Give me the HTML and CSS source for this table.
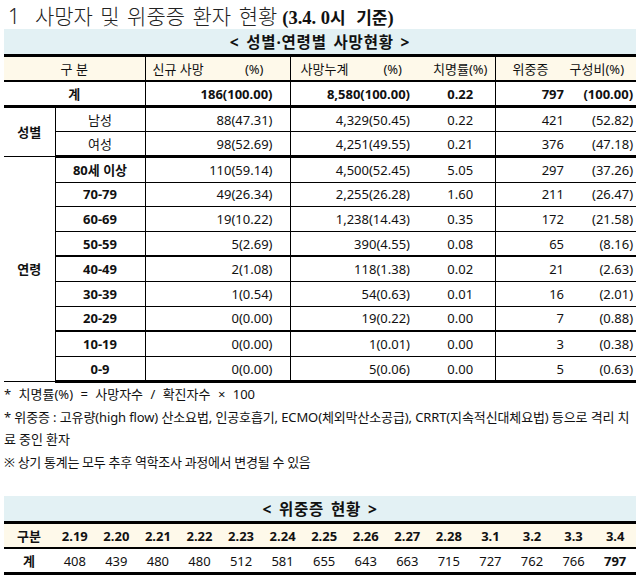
FILE: index.html
```html
<!DOCTYPE html>
<html lang="ko">
<head>
<meta charset="utf-8">
<title>사망자 및 위중증 환자 현황</title>
<link rel="stylesheet" href="styles.css">
</head>
<body>
<div class="page">
  <h1 class="title"><span class="title-main">1&nbsp; 사망자 및 위중증 환자 현황</span><span class="title-date"><span class="serif">(3.4. 0</span>시 기준<span class="serif">)</span></span></h1>

  <table class="deaths">
    <colgroup>
      <col class="c1"><col class="c2"><col class="c3"><col class="c4"><col class="c5"><col class="c6a"><col class="c6b">
    </colgroup>
    <thead>
      <tr class="band"><th colspan="7">&lt; 성별·연령별 사망현황 &gt;</th></tr>
      <tr class="head">
        <th colspan="2" class="vr">구 분</th>
        <th class="vr"><div class="split split-new"><span>신규 사망</span><span>(%)</span></div></th>
        <th><div class="split split-cum"><span>사망누계</span><span>(%)</span></div></th>
        <th class="vr">치명률(%)</th>
        <th colspan="2"><div class="split split-sev"><span>위중증</span><span>구성비(%)</span></div></th>
      </tr>
    </thead>
    <tbody>
      <tr class="total grp-end">
        <td colspan="2" class="vr center">계</td>
        <td class="vr num n-new">186(100.00)</td>
        <td class="num n-cum">8,580(100.00)</td>
        <td class="vr center">0.22</td>
        <td class="num n-sev">797</td>
        <td class="num n-pct">(100.00)</td>
      </tr>
      <tr>
        <td rowspan="2" class="vr center grp">성별</td>
        <td class="vr center">남성</td>
        <td class="vr num n-new">88(47.31)</td>
        <td class="num n-cum">4,329(50.45)</td>
        <td class="vr center">0.22</td>
        <td class="num n-sev">421</td>
        <td class="num n-pct">(52.82)</td>
      </tr>
      <tr class="grp-end">
        <td class="vr center">여성</td>
        <td class="vr num n-new">98(52.69)</td>
        <td class="num n-cum">4,251(49.55)</td>
        <td class="vr center">0.21</td>
        <td class="num n-sev">376</td>
        <td class="num n-pct">(47.18)</td>
      </tr>
      <tr class="age-row">
        <td rowspan="9" class="vr center grp">연령</td>
        <td class="vr center age">80세 이상</td>
        <td class="vr num n-new">110(59.14)</td>
        <td class="num n-cum">4,500(52.45)</td>
        <td class="vr center">5.05</td>
        <td class="num n-sev">297</td>
        <td class="num n-pct">(37.26)</td>
      </tr>
      <tr class="age-row">
        <td class="vr center age">70-79</td>
        <td class="vr num n-new">49(26.34)</td>
        <td class="num n-cum">2,255(26.28)</td>
        <td class="vr center">1.60</td>
        <td class="num n-sev">211</td>
        <td class="num n-pct">(26.47)</td>
      </tr>
      <tr class="age-row">
        <td class="vr center age">60-69</td>
        <td class="vr num n-new">19(10.22)</td>
        <td class="num n-cum">1,238(14.43)</td>
        <td class="vr center">0.35</td>
        <td class="num n-sev">172</td>
        <td class="num n-pct">(21.58)</td>
      </tr>
      <tr class="age-row mid">
        <td class="vr center age">50-59</td>
        <td class="vr num n-new">5(2.69)</td>
        <td class="num n-cum">390(4.55)</td>
        <td class="vr center">0.08</td>
        <td class="num n-sev">65</td>
        <td class="num n-pct">(8.16)</td>
      </tr>
      <tr class="age-row">
        <td class="vr center age">40-49</td>
        <td class="vr num n-new">2(1.08)</td>
        <td class="num n-cum">118(1.38)</td>
        <td class="vr center">0.02</td>
        <td class="num n-sev">21</td>
        <td class="num n-pct">(2.63)</td>
      </tr>
      <tr class="age-row">
        <td class="vr center age">30-39</td>
        <td class="vr num n-new">1(0.54)</td>
        <td class="num n-cum">54(0.63)</td>
        <td class="vr center">0.01</td>
        <td class="num n-sev">16</td>
        <td class="num n-pct">(2.01)</td>
      </tr>
      <tr class="age-row mid">
        <td class="vr center age">20-29</td>
        <td class="vr num n-new">0(0.00)</td>
        <td class="num n-cum">19(0.22)</td>
        <td class="vr center">0.00</td>
        <td class="num n-sev">7</td>
        <td class="num n-pct">(0.88)</td>
      </tr>
      <tr class="age-row">
        <td class="vr center age">10-19</td>
        <td class="vr num n-new">0(0.00)</td>
        <td class="num n-cum">1(0.01)</td>
        <td class="vr center">0.00</td>
        <td class="num n-sev">3</td>
        <td class="num n-pct">(0.38)</td>
      </tr>
      <tr class="age-row last">
        <td class="vr center age">0-9</td>
        <td class="vr num n-new">0(0.00)</td>
        <td class="num n-cum">5(0.06)</td>
        <td class="vr center">0.00</td>
        <td class="num n-sev">5</td>
        <td class="num n-pct">(0.63)</td>
      </tr>
    </tbody>
  </table>

  <div class="notes">
    <p class="note note-wide">* 치명률(%) = 사망자수 / 확진자수 × 100</p>
    <p class="note note-tight">* 위중증 : 고유량(high flow) 산소요법, 인공호흡기, ECMO(체외막산소공급), CRRT(지속적신대체요법) 등으로 격리 치료 중인 환자</p>
    <p class="note note-remark">※ 상기 통계는 모두 추후 역학조사 과정에서 변경될 수 있음</p>
  </div>

  <table class="severe">
    <colgroup><col class="s1"><col span="14"></colgroup>
    <thead>
      <tr class="band"><th colspan="15">&lt; 위중증 현황 &gt;</th></tr>
      <tr class="head">
        <th>구분</th><th>2.19</th><th>2.20</th><th>2.21</th><th>2.22</th><th>2.23</th><th>2.24</th><th>2.25</th><th>2.26</th><th>2.27</th><th>2.28</th><th>3.1</th><th>3.2</th><th>3.3</th><th>3.4</th>
      </tr>
    </thead>
    <tbody>
      <tr>
        <th>계</th><td>408</td><td>439</td><td>480</td><td>480</td><td>512</td><td>581</td><td>655</td><td>643</td><td>663</td><td>715</td><td>727</td><td>762</td><td>766</td><td class="strong">797</td>
      </tr>
    </tbody>
  </table>
</div>
</body>
</html>
```

FILE: styles.css
```css
html, body {
  margin: 0;
  padding: 0;
  background: #fff;
}

body {
  font-family: "Noto Sans", "Noto Sans CJK KR", sans-serif;
  color: #111;
  font-size: 13px;
}

.page {
  width: 632px;
  padding: 0 4px;
}

.title {
  margin: 0;
  height: 29px;
  padding-left: 4px;
  line-height: 28px;
  white-space: nowrap;
}

.title-main {
  font-size: 21px;
  font-weight: 300;
  color: #222;
  word-spacing: 2px;
}

.title-date {
  margin-left: 5px;
  font-size: 17px;
  font-weight: 700;
  color: #111;
  word-spacing: 6px;
}

.serif {
  font-family: "Liberation Serif", "Noto Sans CJK KR", serif;
  font-size: 18.5px;
  word-spacing: 0;
}

table {
  width: 632px;
  border-collapse: collapse;
  table-layout: fixed;
}

th, td {
  padding: 0;
  height: 23px;
  line-height: 18px;
  white-space: nowrap;
}

.age-row td {
  height: 23.6px;
}

.band th {
  background: #e3f1f4;
  height: 25px;
  font-size: 15.5px;
  font-weight: 700;
  letter-spacing: 0.8px;
  word-spacing: 2px;
  text-align: center;
  border-bottom: 3px solid #000;
}

.head th {
  background: #fef9ea;
  font-weight: 400;
  text-align: center;
}

.deaths .head th {
  border-bottom: 2px solid #000;
}

.c1 { width: 51px; }
.c2 { width: 90px; }
.c3 { width: 145px; }
.c4 { width: 136px; }
.c5 { width: 69px; }
.c6a { width: 77px; }
.c6b { width: 64px; }

.vr {
  border-right: 1px solid #000;
}

.split {
  display: flex;
  justify-content: space-between;
}

.split-new { padding: 0 26px 0 7px; }
.split-cum { padding: 0 24px 0 10px; }
.split-sev { padding: 0 12px 0 17px; }

.deaths td {
  border-bottom: 1px solid #000;
}

.deaths .grp-end td,
.deaths .last td {
  border-bottom: 3px solid #000;
}

.deaths .mid td {
  border-bottom: 2px solid #000;
}

.center { text-align: center; }

.num { text-align: right; }
.n-new { padding-right: 17px; }
.n-cum { padding-right: 16px; }
.n-sev { padding-right: 8px; }
.n-pct { padding-right: 3px; }

.total td { font-weight: 700; }

.grp,
.age { font-weight: 700; }

.notes {
  padding-top: 0;
}

.note {
  margin: 0;
  line-height: 22.5px;
}

.note-wide {
  word-spacing: 4px;
}

.note-tight {
  letter-spacing: -0.12px;
}

.note-remark {
  letter-spacing: -0.3px;
}

.severe {
  margin-top: 23px;
}

.s1 { width: 50px; }

.severe .head th {
  font-weight: 700;
  border-bottom: 2px solid #000;
}

.severe td,
.severe tbody th {
  text-align: center;
  border-bottom: 3px solid #000;
}

.severe td { font-weight: 400; }
.severe tbody th { font-weight: 700; }
.severe .strong { font-weight: 700; }
```
